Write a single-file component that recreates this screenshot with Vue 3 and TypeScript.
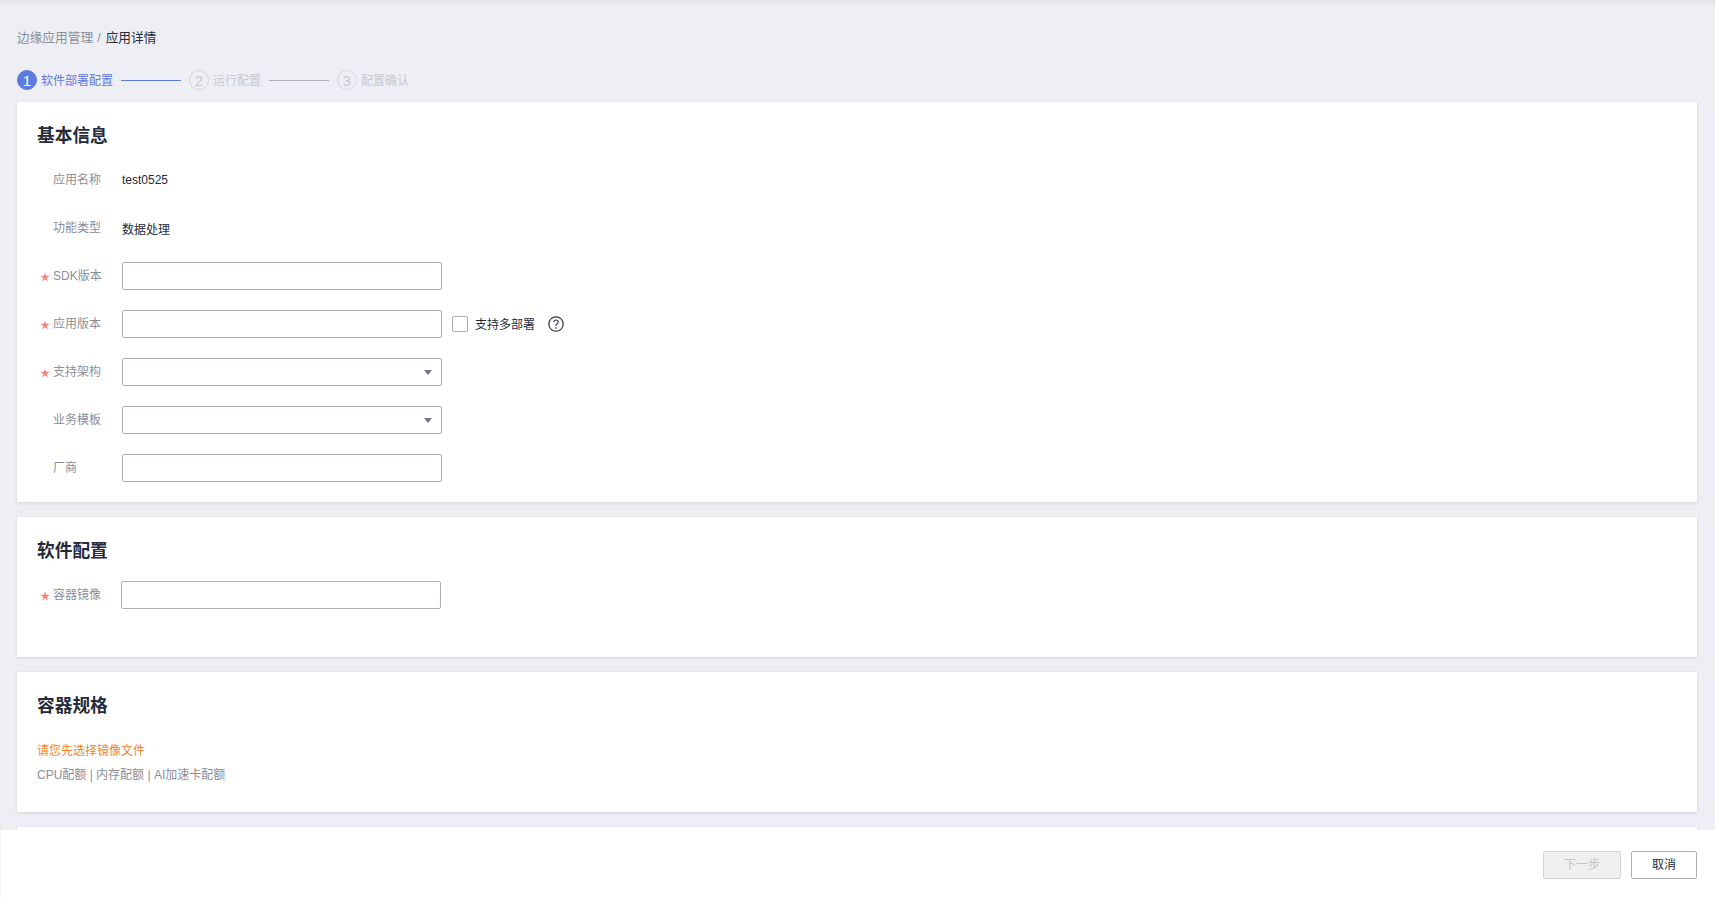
<script setup lang="ts">
interface Row {
  label: string
  required?: boolean
  kind: 'text' | 'input' | 'select'
  value?: string
  extra?: boolean
}
const rows: Row[] = [
  { label: '应用名称', kind: 'text', value: 'test0525' },
  { label: '功能类型', kind: 'text', value: '数据处理' },
  { label: 'SDK版本', required: true, kind: 'input' },
  { label: '应用版本', required: true, kind: 'input', extra: true },
  { label: '支持架构', required: true, kind: 'select' },
  { label: '业务模板', kind: 'select' },
  { label: '厂商', kind: 'input' },
]
const steps = [
  { n: '1', label: '软件部署配置', active: true },
  { n: '2', label: '运行配置', active: false },
  { n: '3', label: '配置确认', active: false },
]
</script>

<template>
  <div class="page">
    <nav class="crumb"><span class="crumb-root">边缘应用管理</span><span class="crumb-sep">/</span><span class="crumb-cur">应用详情</span></nav>

    <div class="steps">
      <template v-for="(s, i) in steps" :key="s.n">
        <div class="step" :class="{ active: s.active }">
          <span class="dot">{{ s.n }}</span>
          <span class="step-label">{{ s.label }}</span>
        </div>
        <span v-if="i < steps.length - 1" class="step-line" :class="{ active: s.active }"></span>
      </template>
    </div>

    <section class="card card-basic">
      <h2 class="title">基本信息</h2>
      <div class="form">
        <div v-for="r in rows" :key="r.label" class="row">
          <span class="star">
            <svg v-if="r.required" width="10" height="10" viewBox="0 0 8 8">
              <path d="M4 0.2 4.8 3 7.8 3 5.3 4.7 6.3 7.7 4 5.8 1.7 7.7 2.7 4.7 0.2 3 3.2 3Z" fill="#f4827d" />
            </svg>
          </span>
          <label class="label">{{ r.label }}</label>
          <span v-if="r.kind === 'text'" class="value">{{ r.value }}</span>
          <div v-else class="input">
            <span v-if="r.kind === 'select'" class="caret"></span>
          </div>
          <div v-if="r.extra" class="extra">
            <span class="check"></span>
            <span class="check-text">支持多部署</span>
            <svg class="help" width="16" height="16" viewBox="0 0 16 16" fill="none">
              <circle cx="8" cy="8" r="7.2" stroke="#3a4050" stroke-width="1.3" />
              <path d="M5.8 6.2C5.8 5 6.8 4 8 4s2.2.9 2.2 2.1c0 1-.6 1.5-1.2 1.9-.7.4-1 .8-1 1.5v.4" stroke="#3a4050" stroke-width="1.2" />
              <circle cx="8" cy="12" r=".85" fill="#3a4050" />
            </svg>
          </div>
        </div>
      </div>
    </section>

    <section class="card card-soft">
      <h2 class="title">软件配置</h2>
      <div class="row row-image">
        <span class="star">
          <svg width="10" height="10" viewBox="0 0 8 8">
            <path d="M4 0.2 4.8 3 7.8 3 5.3 4.7 6.3 7.7 4 5.8 1.7 7.7 2.7 4.7 0.2 3 3.2 3Z" fill="#f4827d" />
          </svg>
        </span>
        <label class="label">容器镜像</label>
        <div class="input"></div>
      </div>
    </section>

    <section class="card card-spec">
      <h2 class="title">容器规格</h2>
      <p class="warn">请您先选择镜像文件</p>
      <p class="quota">CPU配额 | 内存配额 | AI加速卡配额</p>
    </section>

    <section class="card card-next"></section>

    <footer class="footer">
      <button class="btn btn-next" disabled>下一步</button>
      <button class="btn btn-cancel">取消</button>
    </footer>
  </div>
</template>

<style>
html, body { margin: 0; padding: 0; overflow: hidden; }
</style>

<style scoped>
.page {
  position: relative;
  width: 1715px;
  height: 898px;
  overflow: hidden;
  box-sizing: border-box;
  padding: 0 18px 0 17px;
  background: #eeeff4;
  box-shadow: inset 0 5px 6px -3px rgba(0, 0, 0, 0.07);
  font-family: "Liberation Sans", "Noto Sans CJK SC", sans-serif;
  font-size: 12px;
  color: #252b3a;
}
.crumb {
  height: 20px;
  padding-top: 28px;
  display: flex;
  align-items: center;
  font-size: 12.7px;
  line-height: 20px;
}
.crumb-root { color: #8a8e99; }
.crumb-sep { color: #8a8e99; margin: 0 5px 0 4px; }
.crumb-cur { color: #252b3a; }

.steps {
  margin-top: 22px;
  height: 20px;
  display: flex;
  align-items: center;
  gap: 8px;
  margin-bottom: 12px;
}
.step { display: flex; align-items: center; gap: 4px; color: #c6c8ce; }
.step-label { position: relative; top: -1px; }
.dot {
  width: 20px;
  height: 20px;
  box-sizing: border-box;
  border: 1px solid #d3d5da;
  border-radius: 50%;
  display: flex;
  align-items: center;
  justify-content: center;
  font-size: 15px;
  color: #c6c8ce;
}
.step.active { color: #5e7ce0; }
.step.active .dot { background: #5e7ce0; border-color: #5e7ce0; color: #fff; }
.step-line { width: 60px; height: 1px; background: #adb0b8; }
.step-line.active { background: #5e7ce0; }

.card {
  background: #fff;
  box-shadow: 0 1px 3px rgba(0, 0, 0, 0.12);
  box-sizing: border-box;
  padding: 0 20px;
  margin-bottom: 15px;
  overflow: hidden;
}
.card-basic { height: 400px; }
.card-soft { height: 140px; }
.card-spec { height: 140px; }
.card-next { height: 60px; }
.title {
  margin: 22px 0 0;
  font-size: 17.7px;
  line-height: 24px;
  font-weight: 700;
  color: #252b3a;
}
.form { margin-top: 18px; }
.row {
  display: flex;
  align-items: center;
  height: 28px;
  margin-bottom: 20px;
}
.star {
  width: 16px;
  flex: none;
  height: 10px;
  padding: 1px 0 0 3px;
  box-sizing: border-box;
  line-height: 0;
}
.label {
  width: 69px;
  flex: none;
  color: #8a8e99;
  line-height: 28px;
  height: 28px;
}
.value { color: #252b3a; }
.input {
  position: relative;
  flex: none;
  width: 320px;
  height: 28px;
  box-sizing: border-box;
  border: 1px solid #adb0b8;
  border-radius: 2px;
  background: #fff;
}
.caret {
  position: absolute;
  right: 9px;
  top: 11px;
  width: 0;
  height: 0;
  border-left: 4px solid transparent;
  border-right: 4px solid transparent;
  border-top: 5px solid #71757f;
}
.extra { display: flex; align-items: center; margin-left: 10px; }
.check {
  width: 16px;
  height: 16px;
  box-sizing: border-box;
  border: 1px solid #adb0b8;
  border-radius: 2px;
  background: #fff;
}
.check-text { margin-left: 7px; color: #252b3a; position: relative; top: -1px; }
.help { margin-left: 13px; }
.row-image { margin-top: 18px; }
.row-image .label { width: 68px; }

.warn { margin: 23px 0 0; line-height: 20px; color: #f2842e; }
.quota { margin: 4px 0 0; line-height: 20px; color: #8a8e99; }

.footer {
  position: absolute;
  left: 0;
  right: 0;
  top: 830px;
  height: 68px;
  box-sizing: border-box;
  padding: 21px 18px 0 0;
  background: #fff;
  border-left: 1px solid #f3f3f5;
  display: flex;
  justify-content: flex-end;
  align-items: flex-start;
  gap: 10px;
}
.btn {
  height: 28px;
  box-sizing: border-box;
  border-radius: 2px;
  font-family: inherit;
  font-size: 12px;
  line-height: 24px;
  padding: 0 0 1px;
}
.btn-next {
  width: 78px;
  background: #f0f0f0;
  border: 1px solid #d3d5d9;
  color: #c4c4c4;
}
.btn-cancel {
  width: 66px;
  background: #fff;
  border: 1px solid #adb0b8;
  color: #252b3a;
}
</style>
